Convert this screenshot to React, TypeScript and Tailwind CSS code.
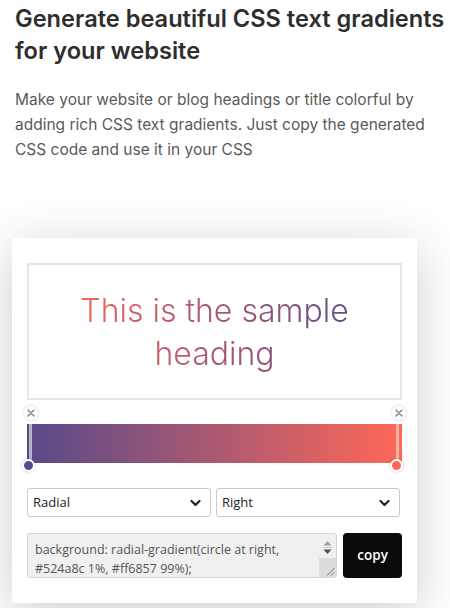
import React from "react";

const X = () => (
  <svg width="10" height="10" viewBox="0 0 10 10" fill="none" stroke="#8a8a8a" strokeWidth="1.6" strokeLinecap="round">
    <path d="M2 2 L8 8 M8 2 L2 8" />
  </svg>
);

const Chevron = () => (
  <svg width="11" height="8" viewBox="0 0 11 8" fill="none" stroke="#222" strokeWidth="2.2" strokeLinecap="round" strokeLinejoin="round">
    <path d="M1.5 2 L5.5 6 L9.5 2" />
  </svg>
);

export default function App() {
  const code =
    "background: radial-gradient(circle at right, #524a8c 1%, #ff6857 99%);\n-webkit-background-clip: text;\n-webkit-text-fill-color: transparent;";
  return (
    <div className="min-h-[608px] bg-white font-['Inter',sans-serif]">
      <div className="pl-[15px] pr-[4px] pt-[3px]">
        <h1 className="text-[23.6px] leading-[32px] font-semibold text-[#2e2e2e]">
          Generate beautiful CSS text gradients for your website
        </h1>
        <p className="mt-[20px] text-[15.5px] leading-[25px] text-[#5a5a5a]">
          Make your website or blog headings or title colorful by adding rich CSS text gradients. Just copy the generated CSS code and use it in your CSS
        </p>
      </div>
      <div className="ml-[12px] mt-[76px] w-[405px] rounded-[3px] bg-white px-[15px] pt-[25px] pb-[25px] shadow-[0_10px_50px_rgba(0,0,0,0.2)]">
        <div className="flex h-[137px] items-center justify-center border-2 border-[#e6e6e6] px-4 text-center">
          <div className="inline-block bg-[radial-gradient(circle_at_right,#524a8c_1%,#ff6857_99%)] bg-clip-text text-[32px] font-light leading-[43px] text-transparent">
            This is the sample heading
          </div>
        </div>
        <div className="relative mt-[24px] h-[39px] bg-[linear-gradient(to_right,#574a8a,#ff6857)]">
          <div className="absolute left-[2px] top-0 h-full w-[3px] bg-[#b9b3c6]" />
          <div className="absolute right-[3px] top-0 h-full w-[3px] bg-[#f6b3a8]" />
          <div className="absolute left-[-3px] top-[-18px] flex h-[14px] w-[14px] items-center justify-center rounded-full bg-white shadow-[0_0_3px_rgba(0,0,0,0.2)]">
            <X />
          </div>
          <div className="absolute right-[-4px] top-[-18px] flex h-[14px] w-[14px] items-center justify-center rounded-full bg-white shadow-[0_0_3px_rgba(0,0,0,0.2)]">
            <X />
          </div>
          <div className="absolute left-[-5px] top-[35px] h-[13px] w-[13px] rounded-full border-[2px] border-white bg-[#524a8c] shadow-[0_0_3px_rgba(0,0,0,0.25)]" />
          <div className="absolute right-[-1px] top-[35px] h-[13px] w-[13px] rounded-full border-[2px] border-white bg-[#ff6857] shadow-[0_0_3px_rgba(0,0,0,0.25)]" />
        </div>
        <div className="mt-[25px] flex gap-[5px] font-['Open_Sans',sans-serif] text-[13px] text-[#222]">
          <div className="flex h-[29px] w-[184px] items-center justify-between rounded-[3px] border border-[#c9c9c9] bg-white pl-[5px] pr-[9px]">
            <span>Radial</span>
            <Chevron />
          </div>
          <div className="flex h-[29px] w-[184px] items-center justify-between rounded-[3px] border border-[#c9c9c9] bg-white pl-[5px] pr-[9px]">
            <span>Right</span>
            <Chevron />
          </div>
        </div>
        <div className="mt-[16px] flex gap-[6px]">
          <div className="relative h-[45px] w-[311px] overflow-hidden rounded-[3px] border border-[#d6d6d6] bg-[#f0f0f0]">
            <div className="whitespace-pre-wrap pl-[7px] pr-[22px] pt-[6px] font-['Open_Sans',sans-serif] text-[12.5px] leading-[19px] text-[#555]">
              {code}
            </div>
            <div className="absolute right-0 top-0 flex h-full w-[17px] flex-col items-center bg-[#f0f0f0]">
              <svg width="9" height="6" viewBox="0 0 9 6" className="mt-[6px]"><path d="M0.5 5.5 L4.5 1 L8.5 5.5 Z" fill="#a0a0a0" /></svg>
              <div className="mt-[1px] h-[1px] w-[9px] bg-[#c8c8c8]" />
              <svg width="9" height="6" viewBox="0 0 9 6" className="mt-[1px]"><path d="M0.5 0.5 L4.5 5 L8.5 0.5 Z" fill="#505050" /></svg>
              <div className="mt-[3px] flex w-full flex-1 items-end justify-end bg-[#dcdcdc] pb-[1px] pr-[1px]">
                <svg width="9" height="9" viewBox="0 0 9 9" stroke="#777" strokeWidth="1"><path d="M8.5 1 L1 8.5 M8.5 5 L5 8.5" /></svg>
              </div>
            </div>
          </div>
          <button className="h-[45px] w-[59px] rounded-[4px] bg-[#0b0b0b] font-['Open_Sans',sans-serif] text-[13.5px] font-semibold text-white">
            copy
          </button>
        </div>
      </div>
    </div>
  );
}
